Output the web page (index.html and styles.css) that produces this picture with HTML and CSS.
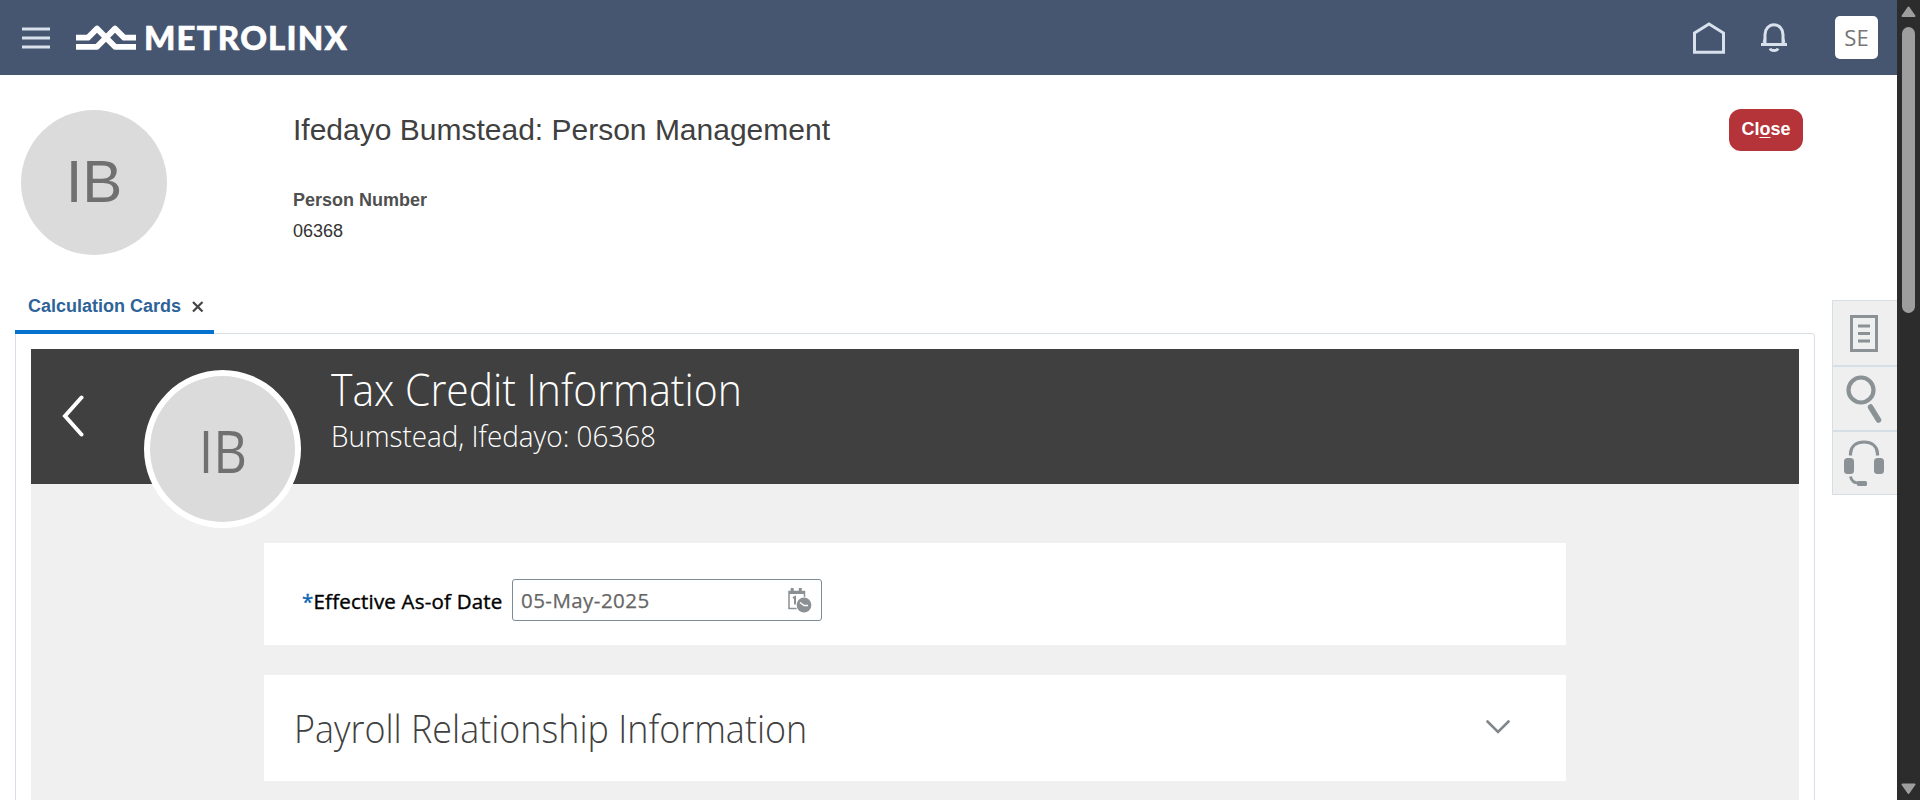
FILE: index.html
```
<!DOCTYPE html>
<html lang="en">
<head>
<meta charset="utf-8">
<title>Person Management</title>
<link rel="stylesheet" href="styles.css">
</head>
<body>
<div class="page">
  <header class="topbar">
    <svg class="menu" width="28" height="22" viewBox="0 0 28 22"><path d="M0 2h28M0 11h28M0 20h28" stroke="#d9e2ec" stroke-width="3"/></svg>
    <svg class="mark" width="60" height="26" viewBox="0 0 60 26" fill="none" stroke="#fff" stroke-width="5.800" stroke-linejoin="round"><path d="M0 12.600h12L21 3.600L39 21.800h21"/><path d="M0 21.800h21L39 3.600L48 12.600h12"/></svg>
    <span class="brand">METROLINX</span>
    <div class="tools">
      <svg class="home" width="32" height="32" viewBox="0 0 32 32" fill="none" stroke="#d9e2ec" stroke-width="3"><path d="M1.500 11L16 1.900L30.500 11V30.300H1.500z"/></svg>
      <svg class="bell" width="26" height="30" viewBox="0 0 26 30" fill="none" stroke="#d9e2ec" stroke-width="3"><path d="M4 21V11.500a9 9.800 0 0 1 18 0V21M0 21.500h26M9 25.500a4.200 3 0 0 0 8 0"/><path d="M2.500 19.500L4 15M23.500 19.500L22 15" stroke-width="2"/></svg>
      <div class="user">SE</div>
    </div>
  </header>

  <section class="person">
    <div class="avatar">IB</div>
    <div class="person-info">
      <h1>Ifedayo Bumstead: Person Management</h1>
      <div class="label">Person Number</div>
      <div class="value">06368</div>
    </div>
    <button class="close">Cl<u>o</u>se</button>
  </section>

  <nav class="tabs">
    <div class="tab"><span>Calculation Cards</span><svg width="12" height="12" viewBox="0 0 12 12"><path d="M1 1l9.500 9.500M10.500 1L1 10.500" stroke="#444" stroke-width="2.200"/></svg></div>
  </nav>

  <main class="panel">
    <div class="banner">
      <svg class="back" width="22" height="42" viewBox="0 0 22 42" fill="none" stroke="#fff" stroke-width="4" stroke-linecap="round"><path d="M19.500 2.500L3 21L19.500 39.500"/></svg>
      <div class="photo"><span>IB</span></div>
      <div class="heading">
        <h2>Tax Credit Information</h2>
        <p>Bumstead, Ifedayo: 06368</p>
      </div>
    </div>
    <div class="cards">
      <section class="card date-card">
        <label><b>*</b>Effective As-of Date</label>
        <div class="field"><span>05-May-2025</span>
          <svg width="24" height="25" viewBox="0 0 24 25"><path d="M1 3.500h15.500v17H1z" fill="#fff" stroke="#8a9094" stroke-width="1.500"/><path d="M1 3h15.500v3H1zM2.700 0h3v6h-3zM10.800 0h3v6h-3z" fill="#8a9094"/><path d="M5 10l2-1v7.500" fill="none" stroke="#8a9094" stroke-width="2"/><circle cx="16" cy="17" r="8.300" fill="#fff"/><circle cx="16" cy="17" r="7.400" fill="#8a9094"/><path d="M12 14.500l4 3h4" fill="none" stroke="#fff" stroke-width="1.400"/></svg>
        </div>
      </section>
      <section class="card info-card">
        <h3>Payroll Relationship Information</h3>
        <svg width="24" height="15" viewBox="0 0 24 15" fill="none" stroke="#80868a" stroke-width="2.600" stroke-linecap="round"><path d="M1.500 1.500L12 12L22.500 1.500"/></svg>
      </section>
    </div>
  </main>

  <aside class="dock">
    <div class="dock-item"><svg width="28" height="37" viewBox="0 0 28 37" fill="none" stroke="#8b9296" stroke-width="3"><path d="M1.500 1.500h25v34h-25zM8 11h12M8 18.500h12M8 26h12"/></svg></div>
    <div class="dock-item"><svg width="36" height="48" viewBox="0 0 36 48" fill="none" stroke="#8b9296"><circle cx="15" cy="15" r="12.500" stroke-width="4.200"/><path d="M24.500 32L32.500 45" stroke-width="5.500" stroke-linecap="round"/></svg></div>
    <div class="dock-item"><svg width="40" height="46" viewBox="0 0 40 46" fill="#8b9296"><path d="M6.500 15.500v-2C7 6 12.500 2 20 2s13 4 13.500 11.500v2" fill="none" stroke="#8b9296" stroke-width="3.200"/><rect x="0" y="18" width="10" height="16" rx="3.500"/><rect x="30" y="18" width="10" height="16" rx="3.500"/><path d="M6.500 36.500c1 4.500 3.500 6.500 8 6.500h1" fill="none" stroke="#8b9296" stroke-width="3"/><rect x="13" y="41" width="10" height="5" rx="1.500"/></svg></div>
  </aside>
</div>
<div class="scrollbar">
  <svg width="15" height="11" viewBox="0 0 15 11"><path d="M7.500 1.500L13.500 10H1.500z" fill="#9e9e9e" stroke="#9e9e9e" stroke-width="2" stroke-linejoin="round"/></svg>
  <div class="thumb"></div>
  <svg class="down" width="15" height="12" viewBox="0 0 15 12"><path d="M1.500 1.500h12L7.500 10z" fill="#9e9e9e" stroke="#9e9e9e" stroke-width="2" stroke-linejoin="round"/></svg>
</div>
</body>
</html>
```
FILE: styles.css
```
* { box-sizing: border-box; }
body { margin: 0; width: 1920px; height: 800px; display: flex; overflow: hidden; background: #fff; font-family: "Liberation Sans", sans-serif; color: #404040; }
h1, h2, h3, p { margin: 0; font-weight: 400; white-space: nowrap; }
svg { display: block; flex: none; }
.page { position: relative; width: 1897px; height: 800px; overflow: hidden; display: flex; flex-direction: column; }
.topbar { height: 75px; flex: none; background: #465670; display: flex; align-items: center; padding-left: 22px; }
.mark { margin-left: 26px; }
.brand { margin: 0 0 2px 8px; font: 900 33px/40px Lato, sans-serif; letter-spacing: 1.200px; color: #fff; -webkit-text-stroke: .6px #fff; }
.tools { margin-left: auto; display: flex; align-items: center; padding-right: 19px; }
.bell { margin-left: 36px; }
.user { margin-left: 48px; width: 43px; height: 43px; border-radius: 5px; background: #fff; color: #757575; font: 22px/42px "Open Sans", sans-serif; text-align: center; }
.person { height: 205px; flex: none; display: flex; align-items: flex-start; padding: 34px 94px 0 21px; }
.avatar { width: 146px; height: 145px; margin-top: 1px; border-radius: 50%; background: #dbdbdb; color: #707070; font-size: 60px; line-height: 143px; text-align: center; }
.person-info { margin-left: 126px; }
.person-info h1 { font-size: 30px; line-height: 42px; }
.label { margin-top: 38px; font-size: 18px; line-height: 22px; font-weight: 700; color: #4f4f4f; }
.value { margin-top: 9px; font-size: 18px; line-height: 22px; color: #333; }
.close { margin-left: auto; width: 74px; height: 42px; padding: 0 0 3px; border: 0; border-radius: 12px; background: #b4343a; color: #fff; font: 700 18px/36px "Liberation Sans", sans-serif; }
.close u { text-underline-offset: 2px; }
.tabs { height: 54px; flex: none; padding-left: 15px; position: relative; z-index: 1; }
.tab { width: 199px; height: 54px; padding: 2px 0 0 13px; border-bottom: 4px solid #0572ce; display: flex; align-items: center; gap: 11px; color: #2e6398; font-size: 18px; font-weight: 700; white-space: nowrap; }
.tab svg { margin-top: 2px; }
.panel { width: 1800px; height: 480px; flex: none; margin: -1px 0 0 15px; border: 1px solid #d6dfe6; border-radius: 0 3px 0 0; padding: 15px 15px 0; }
.banner { height: 135px; background: #404040; display: flex; align-items: flex-start; padding-left: 31px; }
.back { margin-top: 46px; }
.photo { position: relative; width: 157px; height: 158px; margin: 21px 0 0 60px; border-radius: 50%; border: 6px solid #fff; background: #dbdbdb; color: #707070; font: 58px/150px "Open Sans", sans-serif; text-align: center; }
.photo span { display: inline-block; transform: scaleX(.9); }
.heading { margin: 12px 0 0 30px; color: #fff; font-family: "Open Sans", sans-serif; }
.heading h2 { font-size: 45px; line-height: 56px; font-weight: 300; transform: scaleX(.908); transform-origin: left; }
.heading p { font-size: 30px; line-height: 38px; font-weight: 300; transform: scaleX(.928); transform-origin: left; }
.cards { height: 330px; background: #f0f0f0; padding: 59px 233px 0; display: flex; flex-direction: column; gap: 30px; }
.card { background: #fff; display: flex; }
.date-card { height: 102px; padding: 36px 0 0 38px; font: 500 20.500px/44px "Open Sans", sans-serif; color: #000; }
.date-card label { width: 210px; flex: none; white-space: nowrap; letter-spacing: .200px; -webkit-text-stroke: .4px; }
.date-card b { font-weight: 500; color: #0a66b5; }
.field { width: 310px; height: 42px; flex: none; border: 1px solid #7b8b99; border-radius: 3px; padding: 0 9px 0 8px; display: flex; align-items: center; justify-content: space-between; color: #666; letter-spacing: .450px; -webkit-text-stroke: .25px; }
.info-card { height: 106px; padding: 0 56px 0 30px; justify-content: space-between; align-items: center; }
.info-card h3 { font: 300 39px/50px "Open Sans", sans-serif; transform: scaleX(.92); transform-origin: left; }
.info-card svg { margin-bottom: 2px; }
.dock { position: absolute; right: 0; top: 300px; width: 65px; height: 195px; border: 1px solid #d6dfe6; border-right: 0; background: #efefef; display: grid; grid-template-rows: 64px 65px 64px; }
.dock-item { display: flex; align-items: center; justify-content: center; padding-right: 2px; }
.dock-item + .dock-item { border-top: 2px solid #d6dfe6; }
.scrollbar { width: 23px; height: 800px; background: #2c2c2c; display: flex; flex-direction: column; align-items: center; padding-top: 6px; }
.thumb { width: 13px; height: 286px; margin-top: 10px; border-radius: 7px; background: #9e9e9e; }
.down { margin-top: auto; margin-bottom: 5px; }
```
